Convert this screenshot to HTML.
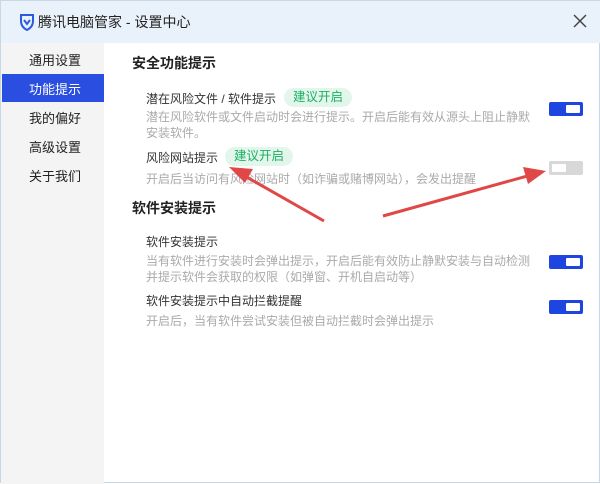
<!DOCTYPE html>
<html><head><meta charset="utf-8"><style>
*{margin:0;padding:0;box-sizing:border-box}
body{width:600px;height:483px;background:#fff;font-family:"Liberation Sans","Noto Sans CJK SC",sans-serif;position:relative;overflow:hidden;border:1px solid #c9d6e3}
.t{position:absolute;white-space:nowrap}
.title{position:absolute;left:0;top:0;width:600px;height:42px;background:#e9f2fa}
.side{position:absolute;left:0;top:42px;width:103px;height:441px;background:#f4f4f4}
.si{position:absolute;left:28px;font-size:13px;color:#222}
.sel{position:absolute;left:1px;top:73px;width:102px;height:28px;background:#2a4fe0}
h3{position:absolute;left:131px;font-size:14px;font-weight:bold;color:#222;white-space:nowrap}
.it{position:absolute;left:145px;font-size:12px;color:#333;white-space:nowrap}
.d{position:absolute;left:145px;font-size:12px;color:#aaa;line-height:16px;white-space:nowrap}
.badge{position:absolute;height:19px;padding:0 9px;border-radius:10px;background:#e3f6ec;color:#1aaf63;font-size:12.5px;line-height:19px}
.tg{position:absolute;left:548px;width:34px;height:14px;border-radius:2px;background:#1f45e0}
.tg::after{content:"";position:absolute;right:3px;top:3px;width:14px;height:8px;background:#fff;border-radius:1px}
.tg.off{background:#d8d8d8}
.tg.off::after{left:3px;right:auto}
</style></head><body>
<div class="title"></div>
<svg style="position:absolute;left:18px;top:12px" width="16" height="18" viewBox="0 0 16 18"><path d="M2 2 L14 2 L14 8 Q14 14 8 17 Q2 14 2 8 Z" fill="none" stroke="#2a5be0" stroke-width="2"/><path d="M5 7 L8 11 L11 7" fill="none" stroke="#2a5be0" stroke-width="2"/></svg>
<div class="t" style="left:37px;top:11px;font-size:14px;color:#222">腾讯电脑管家 - 设置中心</div>
<svg style="position:absolute;left:572px;top:13px" width="14" height="14"><path d="M1 1L13 13M13 1L1 13" stroke="#444" stroke-width="1.5"/></svg>
<div class="side"></div>
<div class="sel"></div>
<div class="si" style="top:49px">通用设置</div>
<div class="si" style="top:78px;color:#fff">功能提示</div>
<div class="si" style="top:107px">我的偏好</div>
<div class="si" style="top:136px">高级设置</div>
<div class="si" style="top:165px">关于我们</div>
<h3 style="top:52px">安全功能提示</h3>
<div class="it" style="top:89px">潜在风险文件 / 软件提示</div>
<div class="badge" style="left:283px;top:87px">建议开启</div>
<div class="d" style="top:108px">潜在风险软件或文件启动时会进行提示。开启后能有效从源头上阻止静默<br>安装软件。</div>
<div class="it" style="top:148px">风险网站提示</div>
<div class="badge" style="left:224px;top:146px">建议开启</div>
<div class="d" style="top:170px">开启后当访问有风险网站时（如诈骗或赌博网站），会发出提醒</div>
<h3 style="top:197px">软件安装提示</h3>
<div class="it" style="top:232px">软件安装提示</div>
<div class="d" style="top:252px">当有软件进行安装时会弹出提示，开启后能有效防止静默安装与自动检测<br>并提示软件会获取的权限（如弹窗、开机自启动等）</div>
<div class="it" style="top:291px">软件安装提示中自动拦截提醒</div>
<div class="d" style="top:312px">开启后，当有软件尝试安装但被自动拦截时会弹出提示</div>
<div class="tg" style="top:101px"></div>
<div class="tg off" style="top:160px"></div>
<div class="tg" style="top:254px"></div>
<div class="tg" style="top:299px"></div>
<svg style="position:absolute;left:0;top:0" width="600" height="483">
<path d="M323 220 L242 174" stroke="#e04848" stroke-width="3" fill="none"/>
<polygon points="228,166 252,168 244,182" fill="#e04848"/>
<path d="M382 215 L530 174" stroke="#e04848" stroke-width="3" fill="none"/>
<polygon points="545,170 522,166 527,183" fill="#e04848"/>
</svg>
</body></html>
